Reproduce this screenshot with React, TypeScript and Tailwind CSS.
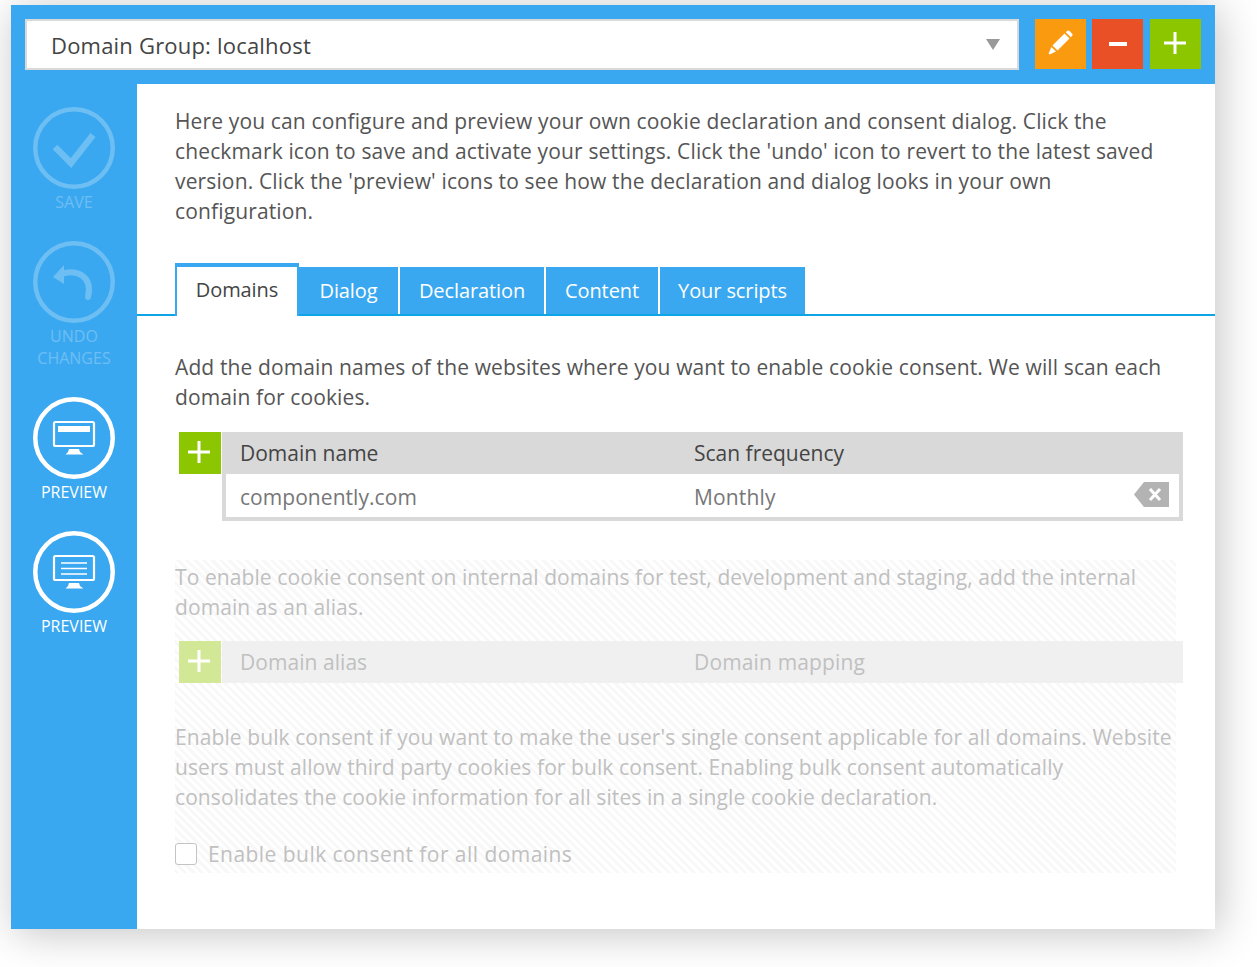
const font = "font-['Open_Sans',sans-serif]"

function PlusIcon() {
    return (
        <svg width="22" height="22" viewBox="0 0 22 22">
            <path d="M11 0v22M0 11h22" stroke="#fff" strokeWidth="3" />
        </svg>
    )
}

function CircleIcon({ children }: { children: React.ReactNode }) {
    return (
        <svg width="82" height="82" viewBox="0 0 82 82" fill="none">
            <circle cx="41" cy="41" r="38.75" stroke="#fff" strokeWidth="4.5" />
            {children}
        </svg>
    )
}

function Monitor({ children }: { children: React.ReactNode }) {
    return (
        <CircleIcon>
            <rect x="21" y="25" width="40" height="24" rx="1.5" stroke="#fff" strokeWidth="2.2" />
            <path d="M36 52h10l1 3 3.5 2.5H32.5L35 55z" fill="#fff" />
            {children}
        </CircleIcon>
    )
}

function SideItem({ label, icon, off }: { label: React.ReactNode; icon: React.ReactNode; off?: boolean }) {
    return (
        <div className={`flex flex-col items-center mb-[28px] ${off ? "opacity-25" : ""}`}>
            {icon}
            <div className="mt-[2px] text-white text-[16px] leading-[22px] text-center">{label}</div>
        </div>
    )
}

export default function App() {
    const tabs = [
        { name: "Dialog", w: "w-[99px]" },
        { name: "Declaration", w: "w-[144px]" },
        { name: "Content", w: "w-[112px]" },
        { name: "Your scripts", w: "w-[145px]" },
    ]
    return (
        <div className={`w-[1257px] h-[967px] pt-[5px] pl-[11px] bg-white overflow-hidden ${font}`}>
            <div className="w-[1204px] h-[924px] flex flex-col bg-[#3aa8f0] shadow-[4px_4px_40px_rgba(0,0,0,0.24)]">
                {/* top bar */}
                <div className="h-[79px] shrink-0 pt-[14px] pl-[14px] flex">
                    <div className="w-[994px] h-[51px] bg-white border-2 border-[#d9d9d9] flex items-center justify-between pl-[24px] pr-[17px]">
                        <span className="pt-[2px] text-[#444] text-[22px] tracking-[0.2px]">Domain Group: localhost</span>
                        <svg width="14" height="11" viewBox="0 0 14 11"><path d="M0 0h14L7 11z" fill="#999" /></svg>
                    </div>
                    <div className="w-[51px] h-[50px] ml-[16px] pb-[3px] pr-[1px] bg-[#fa9a0e] flex items-center justify-center">
                        <svg width="26" height="26" viewBox="0 0 26 26" fill="#fff">
                            <path d="M5.5 15.5 17.5 3.5l5 5-12 12z" />
                            <path d="M18.8 2.2 20 1c.8-.8 1.8-.8 2.6 0l2.4 2.4c.8.8.8 1.8 0 2.6l-1.2 1.2z" />
                            <path d="M4.4 17 9 21.6 2.6 24.4l-1-1z" />
                        </svg>
                    </div>
                    <div className="w-[51px] h-[50px] ml-[6px] pb-[1px] bg-[#ea5025] flex items-center justify-center">
                        <div className="w-[18px] h-[4px] bg-white" />
                    </div>
                    <div className="w-[51px] h-[50px] ml-[7px] pr-[1px] pb-[3px] bg-[#8bc600] flex items-center justify-center">
                        <PlusIcon />
                    </div>
                </div>

                <div className="flex flex-1 min-h-0">
                    {/* sidebar */}
                    <div className="w-[126px] shrink-0 pt-[23px]">
                        <SideItem
                            off
                            label="SAVE"
                            icon={
                                <CircleIcon>
                                    <path d="M22 40l16 16 22-28" stroke="#fff" strokeWidth="6.5" />
                                </CircleIcon>
                            }
                        />
                        <SideItem
                            off
                            label={<>UNDO<br />CHANGES</>}
                            icon={
                                <CircleIcon>
                                    <path d="M20 36 31 24v19z" fill="#fff" />
                                    <path d="M28 33c16-5 32 2 27 23" stroke="#fff" strokeWidth="6" strokeLinecap="round" />
                                </CircleIcon>
                            }
                        />
                        <SideItem
                            label="PREVIEW"
                            icon={
                                <Monitor>
                                    <rect x="25" y="29" width="32" height="6" fill="#fff" />
                                </Monitor>
                            }
                        />
                        <SideItem
                            label="PREVIEW"
                            icon={
                                <Monitor>
                                    <path d="M28 32h26M28 37.5h26M28 43h26" stroke="#fff" strokeWidth="1.6" />
                                </Monitor>
                            }
                        />
                    </div>

                    {/* main */}
                    <div className="flex-1 bg-white pt-[22px] text-[#555] text-[21px] leading-[30px]">
                        <p className="pl-[38px] tracking-[0.14px]">
                            Here you can configure and preview your own cookie declaration and consent dialog. Click the<br />
                            checkmark icon to save and activate your settings. Click the 'undo' icon to revert to the latest saved<br />
                            version. Click the 'preview' icons to see how the declaration and dialog looks in your own<br />
                            configuration.
                        </p>

                        <div className="mt-[37px] h-[53px] pl-[38px] flex items-end border-b-2 border-[#0ea5e6] text-[20px] tracking-[-0.1px]">
                            <div className="w-[124px] h-[53px] pb-[3px] bg-white border-t-4 border-x-2 border-[#3aa8f0] -mb-[2px] flex items-center justify-center text-[#444]">Domains</div>
                            <div className="flex gap-[2px]">
                                {tabs.map((t) => (
                                    <div key={t.name} className={`${t.w} h-[47px] bg-[#3aa8f0] text-white flex items-center justify-center`}>{t.name}</div>
                                ))}
                            </div>
                        </div>

                        <p className="mt-[36px] pl-[38px] tracking-[0.12px]">
                            Add the domain names of the websites where you want to enable cookie consent. We will scan each<br />
                            domain for cookies.
                        </p>

                        <div className="mt-[20px] ml-[42px] w-[1004px] flex">
                            <div className="w-[42px] h-[42px] pr-[2px] pb-[2px] bg-[#8bc600] flex items-center justify-center">
                                <PlusIcon />
                            </div>
                            <div className="w-[961px] ml-[1px]">
                                <div className="h-[42px] bg-[#d9d9d9] flex items-center pl-[18px] text-[#444]">
                                    <span className="w-[454px]">Domain name</span>
                                    <span>Scan frequency</span>
                                </div>
                                <div className="h-[47px] border-4 border-t-0 border-[#d9d9d9] flex items-center pl-[14px] pr-[10px] text-[#777]">
                                    <span className="w-[454px] mt-[2px] tracking-[0.05px]">componently.com</span>
                                    <span className="flex-1 mt-[2px] tracking-[0.15px]">Monthly</span>
                                    <svg width="35" height="25" viewBox="0 0 35 25" className="mb-[2px]">
                                        <path d="M10 0h25v25H10L0 12.5z" fill="#b3b3b3" />
                                        <path d="M16 7l10 11M26 7 16 18" stroke="#fff" strokeWidth="3" />
                                    </svg>
                                </div>
                            </div>
                        </div>

                        {/* disabled part */}
                        <div className="mt-[39px] ml-[38px] w-[1001px] h-[313px] pt-[2px] tracking-[0.09px] text-[#c0c0c0] bg-[repeating-linear-gradient(45deg,#f8f8f8_0,#f8f8f8_3px,#ffffff_3px,#ffffff_6px)]">
                            <p>
                                To enable cookie consent on internal domains for test, development and staging, add the internal<br />
                                domain as an alias.
                            </p>
                            <div className="mt-[19px] ml-[4px] w-[1004px] h-[42px] flex">
                                <div className="w-[42px] h-full pr-[2px] pb-[2px] bg-[#d3e897] flex items-center justify-center">
                                    <PlusIcon />
                                </div>
                                <div className="flex-1 ml-[1px] bg-[#f0f0f0] flex items-center pl-[18px]">
                                    <span className="w-[454px] tracking-[0.05px]">Domain alias</span>
                                    <span className="tracking-[0.15px]">Domain mapping</span>
                                </div>
                            </div>
                            <p className="mt-[39px]">
                                Enable bulk consent if you want to make the user's single consent applicable for all domains. Website<br />
                                users must allow third party cookies for bulk consent. Enabling bulk consent automatically<br />
                                consolidates the cookie information for all sites in a single cookie declaration.
                            </p>
                            <label className="mt-[27px] flex items-center tracking-[0.45px]">
                                <span className="w-[22px] h-[22px] bg-white border border-[#c4c4c4] rounded-[3px] mr-[11px]" />
                                Enable bulk consent for all domains
                            </label>
                        </div>
                    </div>
                </div>
            </div>
        </div>
    )
}
